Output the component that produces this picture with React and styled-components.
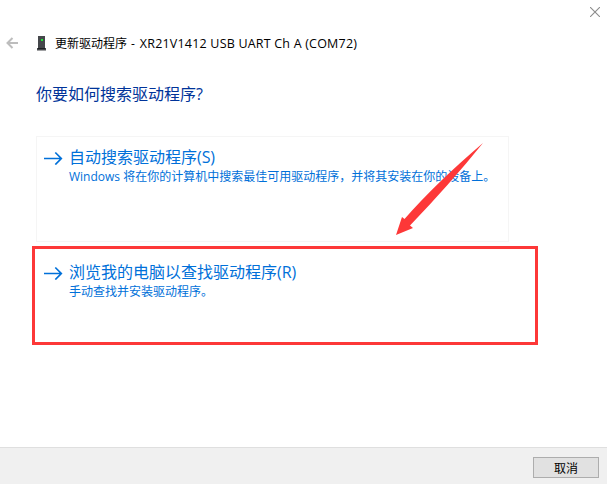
import React from 'react';
import styled, { createGlobalStyle } from 'styled-components';

const GlobalStyle = createGlobalStyle`
  * { box-sizing: border-box; }
  body { margin: 0; background: #fff; }
`;

const Dialog = styled.div`
  position: relative;
  width: 607px;
  height: 484px;
  display: flex;
  flex-direction: column;
  overflow: hidden;
  background: #fff;
  font-family: 'Noto Sans CJK SC', sans-serif;
  font-size: 12px;
  color: #000;
`;

const TitleBar = styled.div`
  display: flex;
  justify-content: flex-end;
  height: 33px;
  padding: 7px 7px 0 0;
`;

const Header = styled.header`
  display: flex;
  align-items: center;
  height: 20px;
  padding-left: 6px;
`;

const DeviceIcon = styled.svg`
  margin: 0 9px 0 18px;
`;

const Line = styled.div`
  display: flex;
  align-items: baseline;
  white-space: pre;
  font-size: ${(p) => p.$size || 12}px;
  line-height: ${(p) => p.$height || 16}px;
`;

const Latin = styled.span`
  font-family: 'Open Sans', 'Noto Sans', sans-serif;
  font-size: ${(p) => p.$size || 12}px;
  letter-spacing: ${(p) => p.$spacing || 0}px;
`;

const Heading = styled.h1`
  margin: 28px 0 0 36px;
  color: #003399;
  font-weight: 400;
`;

const Options = styled.div`
  display: flex;
  flex-direction: column;
  gap: 9px;
  margin: 30px 0 0 36px;
  width: 473px;
`;

const Option = styled.div`
  display: flex;
  height: 106px;
  padding: 9px 0 0 7px;
  border: 1px solid ${(p) => (p.$outlined ? '#f5f5f5' : 'transparent')};
  color: #0070d9;
`;

const OptionArrow = styled.svg`
  flex: none;
  margin: 5px 6px 0 0;
`;

const OptionText = styled.div`
  display: flex;
  flex-direction: column;
`;

const Footer = styled.footer`
  display: flex;
  justify-content: flex-end;
  height: 37px;
  margin-top: auto;
  padding: 9px 8px 0 0;
  border-top: 1px solid #dfdfdf;
  background: #f0f0f0;
`;

const Button = styled.button`
  width: 66px;
  height: 21px;
  padding: 0 0 1px;
  border: 1px solid #adadad;
  background: #e1e1e1;
  font: 12px/17px 'Noto Sans CJK SC', sans-serif;
  color: #000;
`;

const Highlight = styled.div`
  position: absolute;
  left: 32px;
  top: 246px;
  width: 506px;
  height: 99px;
  border: 3px solid #fd3838;
`;

const Pointer = styled.svg`
  position: absolute;
  left: 390px;
  top: 138px;
`;

function CommandLink({ title, hotkey, outlined, children }) {
  return (
    <Option $outlined={outlined}>
      <OptionArrow width="19" height="14" viewBox="0 0 19 14" fill="none" stroke="#0070d9" strokeWidth="1.7">
        <path d="M0 7.5H17.3M11.3 1.5L17.3 7.5L11.3 13.5" />
      </OptionArrow>
      <OptionText>
        <Line $size={16} $height={21}>
          {title}
          <Latin $size={16} $spacing={-0.1}>{hotkey}</Latin>
        </Line>
        <Line>{children}</Line>
      </OptionText>
    </Option>
  );
}

export default function App() {
  return (
    <>
      <GlobalStyle />
      <Dialog>
        <TitleBar>
          <svg width="10" height="10" viewBox="0 0 10 10" stroke="#8c8c8c" strokeWidth="1.1">
            <path d="M0 0L10 10M10 0L0 10" />
          </svg>
        </TitleBar>
        <Header>
          <svg width="12" height="12" viewBox="0 0 12 12" fill="none" stroke="#bdbdbd" strokeWidth="2">
            <path d="M12 6H1.5M6.5 1L1.5 6L6.5 11" />
          </svg>
          <DeviceIcon width="10" height="15" viewBox="0 0 10 15">
            <path d="M2 0H9V12H10V14.5H1V12H2Z" fill="#45474b" />
            <path d="M2 12.5H9" stroke="#1e1f22" />
            <rect x="5" y="3" width="2" height="2" fill="#20e838" />
          </DeviceIcon>
          <Line>
            更新驱动程序
            <Latin $spacing={0.9}> - </Latin>
            <Latin $size={12.5} $spacing={0.2}>XR21V1412 USB UART Ch A (COM72)</Latin>
          </Line>
        </Header>
        <Heading>
          <Line $size={16} $height={24}>
            你要如何搜索驱动程序
            <Latin $size={16}>?</Latin>
          </Line>
        </Heading>
        <Options>
          <CommandLink title="自动搜索驱动程序" hotkey="(S)" outlined>
            <Latin>Windows </Latin>
            将在你的计算机中搜索最佳可用驱动程序，并将其安装在你的设备上。
          </CommandLink>
          <CommandLink title="浏览我的电脑以查找驱动程序" hotkey="(R)">
            手动查找并安装驱动程序。
          </CommandLink>
        </Options>
        <Footer>
          <Button>取消</Button>
        </Footer>
        <Highlight />
        <Pointer width="96" height="100" viewBox="0 0 96 100">
          <path d="M93 5Q46 45 14.5 81L12 79L6 97L23 90L20 87.5Q59 47 93 5Z" fill="#fd3838" />
        </Pointer>
      </Dialog>
    </>
  );
}
